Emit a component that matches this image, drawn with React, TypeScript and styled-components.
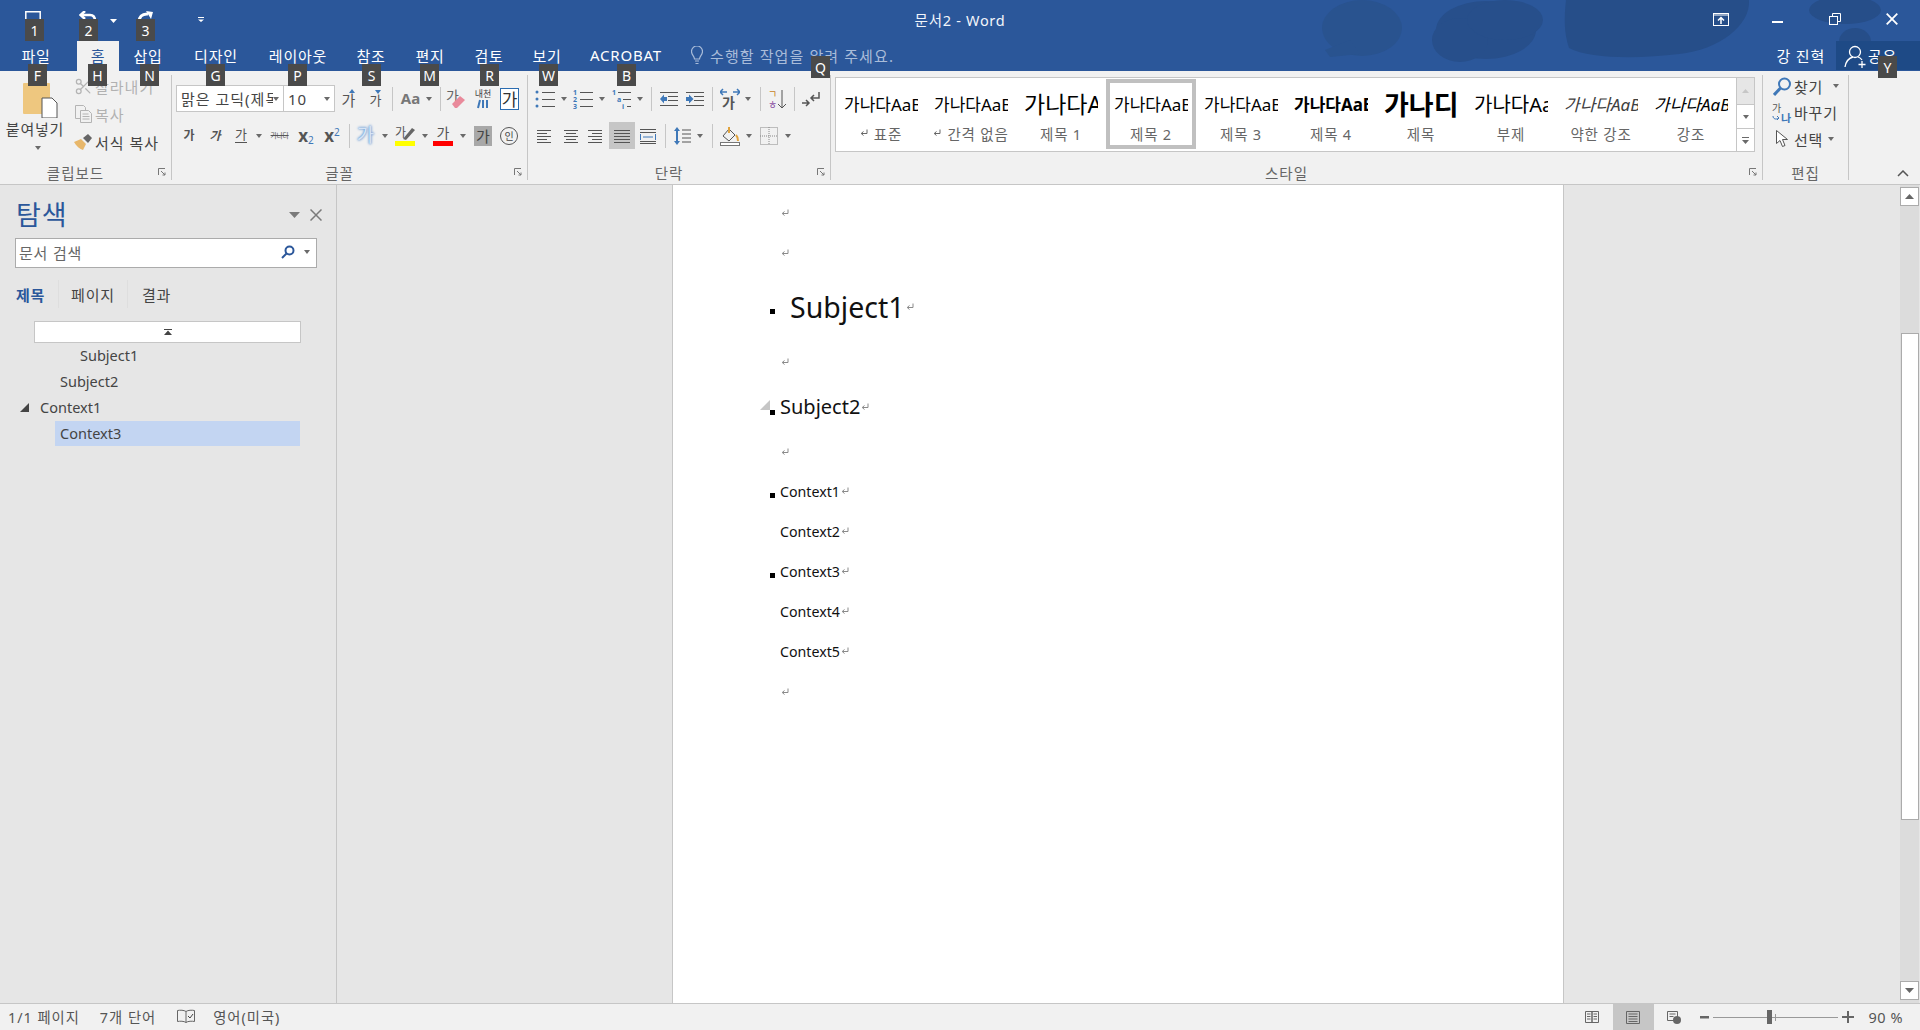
import React from 'react';
import styled, { createGlobalStyle } from 'styled-components';
import { Scissors } from 'lucide-react';

const GlobalStyle = createGlobalStyle`
  html, body { margin: 0; padding: 0; height: 100%; overflow: hidden; }
  body { font-family: "Noto Sans", "Noto Sans CJK KR", sans-serif; color: #444; }
  * { box-sizing: border-box; }
`;

const Shell = styled.div`
  position: relative;
  width: 1920px;
  height: 1030px;
  display: flex;
  flex-direction: column;
  overflow: hidden;
  background: #e6e6e6;
`;

const KeyTip = styled.div<{ $x: number; $y: number }>`
  position: absolute;
  left: ${(p) => p.$x}px;
  top: ${(p) => p.$y}px;
  width: 19px;
  height: 22px;
  background: #4a4a4a;
  color: #fff;
  font-size: 14px;
  line-height: 24px;
  text-align: center;
  z-index: 5;
`;

/* title bar */
const Header = styled.header`
  position: relative;
  height: 71px;
  background: #2b579a;
  color: #fff;
  flex: none;
`;

const Blobs = styled.svg`
  position: absolute;
  left: 0;
  top: 0;
`;

const TitleRow = styled.div`
  position: relative;
  height: 41px;
  display: grid;
  grid-template-columns: 1fr auto 1fr;
  align-items: center;
`;

const Qat = styled.div`
  display: flex;
  align-items: center;
  height: 100%;
  padding-left: 25px;
`;

const QatSlot = styled.div<{ $w: number }>`
  width: ${(p) => p.$w}px;
  height: 100%;
  padding-top: 11px;
  display: flex;
  align-items: flex-start;
`;

const DocTitle = styled.div`
  font-size: 14.5px;
  letter-spacing: 0.7px;
  margin-top: -2px;
  color: #f2f5fa;
`;

const WinControls = styled.div`
  display: flex;
  justify-content: flex-end;
  height: 100%;
  padding-top: 13px;
`;

const WinBtn = styled.div`
  width: 57px;
  display: flex;
  justify-content: center;
`;

const TabRow = styled.nav`
  position: relative;
  height: 30px;
  display: flex;
  align-items: stretch;
`;

const Tab = styled.div<{ $w: number; $active?: boolean; $mr?: number }>`
  width: ${(p) => p.$w}px;
  margin-right: ${(p) => p.$mr ?? 0}px;
  display: flex;
  align-items: center;
  justify-content: center;
  font-size: 15px;
  letter-spacing: 0.8px;
  padding-bottom: 2px;
  color: ${(p) => (p.$active ? '#2b579a' : '#fff')};
  background: ${(p) => (p.$active ? '#f1f1f1' : 'transparent')};
`;

const TellMe = styled.div`
  margin-left: 14px;
  display: flex;
  align-items: center;
  gap: 7px;
  font-size: 15px;
  letter-spacing: 1.1px;
  padding-bottom: 2px;
  color: #a9bcd9;
`;

const Account = styled.div`
  margin-left: auto;
  display: flex;
  align-items: center;
  font-size: 15px;
  letter-spacing: 0.8px;
  padding-right: 11px;
  padding-bottom: 2px;
`;

const ShareBtn = styled.div`
  width: 84px;
  display: flex;
  align-items: center;
  padding-left: 8px;
  background: #1e4a86;
  font-size: 15px;
  letter-spacing: 0.8px;
  margin-bottom: 1px;
`;

/* ribbon */
const Ribbon = styled.section`
  height: 114px;
  flex: none;
  display: flex;
  background: #f1f1f1;
  border-bottom: 1px solid #c6c6c6;
`;

const RibbonSep = styled.div`
  width: 1px;
  margin: 4px 0 4px;
  background: #c6c6c6;
  flex: none;
`;

const Group = styled.div<{ $w: number }>`
  width: ${(p) => p.$w}px;
  flex: none;
  display: flex;
  flex-direction: column;
`;

const GroupBody = styled.div<{ $pl?: number; $pt?: number }>`
  flex: 1;
  min-height: 0;
  padding-left: ${(p) => p.$pl ?? 0}px;
  padding-top: ${(p) => p.$pt ?? 0}px;
`;

const GroupFoot = styled.div<{ $launch?: boolean }>`
  height: 24px;
  flex: none;
  display: grid;
  grid-template-columns: ${(p) => (p.$launch ? '1fr auto 1fr 20px' : '1fr auto 1fr')};
  align-items: center;
  font-size: 14.5px;
  letter-spacing: 1px;
  color: #666;
`;

const Launcher = styled.svg`
  grid-column: 4;
  justify-self: end;
  margin-right: 5px;
`;

const FootText = styled.span`
  grid-column: 2;
`;

const ClipBody = styled.div`
  flex: 1;
  display: flex;
  min-height: 0;
`;

const PasteBtn = styled.div`
  width: 70px;
  display: flex;
  flex-direction: column;
  align-items: center;
  padding-top: 12px;
  font-size: 15px;
  letter-spacing: 0.8px;
  color: #444;
`;

const PasteIcon = styled.svg`
  flex: none;
  margin-left: 10px;
`;

const PasteLabel = styled.span`
  margin-top: 2px;
  line-height: 18px;
  white-space: nowrap;
`;

const CaretSlot = styled.div`
  display: flex;
  margin-top: 8px;
  margin-left: 6px;
`;

const ClipList = styled.div`
  display: flex;
  flex-direction: column;
  padding-left: 3px;
  padding-top: 1px;
`;

const ClipItem = styled.div<{ $off?: boolean }>`
  height: 28px;
  display: flex;
  align-items: center;
  gap: 2px;
  font-size: 15px;
  letter-spacing: 1px;
  white-space: nowrap;
  color: ${(p) => (p.$off ? '#b1b1b1' : '#444')};
`;

const ClipIcon = styled.div`
  width: 20px;
  display: flex;
  justify-content: center;
`;

const ToolRow = styled.div<{ $mt?: number }>`
  height: 27px;
  margin-top: ${(p) => p.$mt ?? 0}px;
  display: flex;
  align-items: center;
`;

const Cell = styled.div<{ $w: number; $on?: boolean; $gap?: number }>`
  width: ${(p) => p.$w}px;
  height: 27px;
  flex: none;
  display: flex;
  align-items: center;
  justify-content: center;
  gap: ${(p) => p.$gap ?? 0}px;
  background: ${(p) => (p.$on ? '#c6c6c6' : 'transparent')};
`;

const Sep = styled.div<{ $ml?: number }>`
  width: 1px;
  height: 24px;
  flex: none;
  margin-left: ${(p) => p.$ml ?? 0}px;
  background: #c6c6c6;
`;

const Combo = styled.div<{ $w: number }>`
  width: ${(p) => p.$w}px;
  height: 27px;
  flex: none;
  display: flex;
  align-items: center;
  justify-content: space-between;
  padding: 0 4px;
  background: #fff;
  border: 1px solid #c6c6c6;
  font-size: 15px;
  letter-spacing: 1px;
  color: #444;
  & + & { border-left: 0; }
`;

const ComboText = styled.span`
  overflow: hidden;
  white-space: nowrap;
  flex: 1;
  min-width: 0;
`;

const Caret = styled.span`
  display: inline-block;
  width: 0;
  height: 0;
  flex: none;
  border-left: 3.5px solid transparent;
  border-right: 3.5px solid transparent;
  border-top: 4px solid #6a6a6a;
`;

const Ga = styled.span<{ $size?: number; $bold?: boolean; $italic?: boolean; $color?: string }>`
  font-size: ${(p) => p.$size ?? 15}px;
  font-weight: ${(p) => (p.$bold ? 700 : 400)};
  font-style: ${(p) => (p.$italic ? 'italic' : 'normal')};
  color: ${(p) => p.$color ?? '#555'};
  line-height: 1;
  white-space: nowrap;
`;

const Script = styled.span<{ $shift: number }>`
  font-size: 10px;
  line-height: 1;
  color: #3f78b8;
  margin-top: ${(p) => p.$shift}px;
`;

const Underlined = styled(Ga)`
  border-bottom: 1px solid #555;
  padding-bottom: 1px;
`;

const Strike = styled(Ga)`
  text-decoration: line-through;
  text-decoration-thickness: 1px;
  letter-spacing: -0.5px;
`;

const Glow = styled(Ga)`
  text-shadow: 0 0 3px #5b8fd0, 0 0 2px #5b8fd0;
  color: #d6e4f5;
`;

const Boxed = styled.span`
  width: 19px;
  height: 22px;
  display: flex;
  align-items: center;
  justify-content: center;
  border: 1px solid #2b6cb0;
  background: #fff;
  font-size: 17px;
  color: #333;
`;

const Shaded = styled.span`
  width: 18px;
  height: 20px;
  display: flex;
  align-items: center;
  justify-content: center;
  background: #a8a8a8;
  font-size: 15px;
  color: #444;
`;

const Circled = styled.span`
  width: 18px;
  height: 18px;
  border: 1px solid #555;
  border-radius: 50%;
  display: flex;
  align-items: center;
  justify-content: center;
  font-size: 10px;
  color: #444;
`;

const Stack = styled.span`
  display: flex;
  flex-direction: column;
  align-items: center;
  line-height: 1;
`;

const ColorBar = styled.span<{ $color: string }>`
  width: 20px;
  height: 5px;
  margin-top: 1px;
  background: ${(p) => p.$color};
`;

const GrowWrap = styled.span`
  display: flex;
  flex-direction: column;
  align-items: flex-end;
`;

const Tiny = styled.span`
  font-size: 9px;
  line-height: 10px;
  color: #444;
`;

/* styles gallery */
const Gallery = styled.div`
  width: 920px;
  height: 75px;
  margin: 6px 0 0 4px;
  display: flex;
  background: #fff;
  border: 1px solid #c6c6c6;
`;

const StyleItem = styled.div<{ $on?: boolean }>`
  width: 90px;
  height: 70px;
  margin-top: 1px;
  border: 4px solid ${(p) => (p.$on ? '#c0c0c0' : 'transparent')};
  display: flex;
  flex-direction: column;
  align-items: center;
`;

const StyleSample = styled.div<{ $size: number; $bold?: boolean; $italic?: boolean; $color?: string }>`
  width: 74px;
  height: 44px;
  margin-top: -2px;
  overflow: hidden;
  white-space: nowrap;
  display: flex;
  align-items: center;
  flex: none;
  font-size: ${(p) => p.$size}px;
  font-weight: ${(p) => (p.$bold ? 700 : 400)};
  font-style: ${(p) => (p.$italic ? 'italic' : 'normal')};
  color: ${(p) => p.$color ?? '#000'};
`;

const StyleLabel = styled.div`
  height: 16px;
  display: flex;
  align-items: center;
  gap: 6px;
  font-size: 14.5px;
  letter-spacing: 0.8px;
  color: #666;
  white-space: nowrap;
`;

const GalleryScroll = styled.div`
  width: 18px;
  display: flex;
  flex-direction: column;
  margin-left: auto;
  border-left: 1px solid #c6c6c6;
`;

const GalleryBtn = styled.div<{ $h: number; $off?: boolean }>`
  height: ${(p) => p.$h}px;
  display: flex;
  align-items: center;
  justify-content: center;
  background: ${(p) => (p.$off ? '#e6e6e6' : '#fff')};
  & + & { border-top: 1px solid #c6c6c6; }
`;

const EditList = styled.div`
  flex: 1;
  display: flex;
  flex-direction: column;
  padding-top: 2px;
`;

const EditItem = styled.div`
  height: 26.5px;
  display: flex;
  align-items: center;
  font-size: 15px;
  letter-spacing: 0.8px;
  color: #444;
`;

const EditIcon = styled.div`
  width: 31px;
  padding-left: 7px;
  display: flex;
  justify-content: center;
`;

const EditCaret = styled.span<{ $ml: number }>`
  margin-left: ${(p) => p.$ml}px;
  display: flex;
`;

const CollapseCell = styled.div`
  flex: 1;
  display: flex;
  align-items: flex-end;
  justify-content: flex-end;
  padding: 0 11px 7px 0;
`;

/* workspace */
const Workspace = styled.main`
  flex: 1;
  min-height: 0;
  display: flex;
`;

const NavPane = styled.aside`
  width: 337px;
  flex: none;
  border-right: 1px solid #c6c6c6;
  padding-top: 13px;
`;

const NavHead = styled.div`
  height: 30px;
  display: flex;
  align-items: center;
  padding: 0 14px 0 16px;
`;

const NavTitle = styled.h2`
  margin: 0;
  font-size: 27px;
  font-weight: 400;
  letter-spacing: 1px;
  color: #2b579a;
`;

const NavTools = styled.div`
  margin-left: auto;
  margin-top: 4px;
  display: flex;
  align-items: center;
  gap: 10px;
`;

const NavSearch = styled.div`
  width: 302px;
  height: 30px;
  margin: 10px 0 0 15px;
  padding: 0 5px 2px 3px;
  display: flex;
  align-items: center;
  background: #fff;
  border: 1px solid #ababab;
  font-size: 15px;
  letter-spacing: 0.8px;
  color: #666;
`;

const NavSearchTools = styled.div`
  margin-left: auto;
  display: flex;
  align-items: center;
  gap: 9px;
  padding-right: 1px;
`;

const NavTabs = styled.div`
  height: 28px;
  margin: 12px 0 0 16px;
  display: flex;
  align-items: center;
`;

const NavTab = styled.div<{ $w: number; $active?: boolean }>`
  width: ${(p) => p.$w}px;
  height: 28px;
  display: flex;
  align-items: center;
  justify-content: ${(p) => (p.$active ? 'flex-start' : 'center')};
  font-size: 15px;
  letter-spacing: 0.8px;
  font-weight: ${(p) => (p.$active ? 700 : 400)};
  color: ${(p) => (p.$active ? '#2b579a' : '#444')};
  & + & { border-left: 1px solid #dedede; }
`;

const TreeUp = styled.div`
  width: 267px;
  height: 22px;
  margin: 13px 0 0 34px;
  display: flex;
  align-items: center;
  justify-content: center;
  background: #fff;
  border: 1px solid #c6c6c6;
`;

const TreeRow = styled.div<{ $indent: number; $selected?: boolean }>`
  height: ${(p) => (p.$selected ? 25 : 26)}px;
  width: ${(p) => (p.$selected ? '245px' : 'auto')};
  margin-left: ${(p) => (p.$selected ? '55px' : '0')};
  padding-left: ${(p) => p.$indent}px;
  padding-bottom: 2px;
  display: flex;
  align-items: center;
  gap: 11px;
  font-size: 14.5px;
  color: #444;
  background: ${(p) => (p.$selected ? '#c3d5f2' : 'transparent')};
`;

const DocArea = styled.div`
  flex: 1;
  min-width: 0;
  padding-right: 1px;
  display: flex;
  justify-content: center;
`;

const Page = styled.article`
  width: 892px;
  background: #fff;
  border-left: 1px solid #c6c6c6;
  border-right: 1px solid #c6c6c6;
  padding: 8px 0 0 97px;
  color: #111;
`;

const Line = styled.div<{ $h: number; $size?: number }>`
  height: ${(p) => p.$h}px;
  display: flex;
  align-items: center;
  font-size: ${(p) => p.$size ?? 14.2}px;
  white-space: nowrap;
`;

const Gutter = styled.div<{ $w?: number }>`
  position: relative;
  width: ${(p) => p.$w ?? 10}px;
  flex: none;
  align-self: stretch;
  display: flex;
  align-items: center;
`;

const Bullet = styled.span<{ $drop: number }>`
  width: 5px;
  height: 5px;
  background: #000;
  margin-top: ${(p) => p.$drop}px;
`;

const Fold = styled.svg`
  position: absolute;
  left: -10px;
  top: 17px;
`;

const ParaGap = styled.span<{ $mt?: number }>`
  margin-left: 1px;
  margin-top: ${(p) => p.$mt ?? 0}px;
  display: flex;
`;

const ScrollBar = styled.div`
  width: 19px;
  margin-right: 1px;
  flex: none;
  display: flex;
  flex-direction: column;
  align-items: center;
  padding: 2px 0 3px;
  background: #dcdcdc;
`;

const ScrollBtn = styled.div`
  width: 19px;
  height: 19px;
  flex: none;
  display: flex;
  align-items: center;
  justify-content: center;
  background: #fff;
  border: 1px solid #ababab;
`;

const ScrollThumb = styled.div`
  width: 18px;
  height: 487px;
  margin-top: 127px;
  margin-bottom: auto;
  background: #fff;
  border: 1px solid #ababab;
`;

/* status bar */
const StatusBar = styled.footer`
  height: 27px;
  flex: none;
  display: flex;
  align-items: stretch;
  background: #f1f1f1;
  border-top: 1px solid #c6c6c6;
  font-size: 14.3px;
  letter-spacing: 1px;
  color: #555;
`;

const StatusLeft = styled.div`
  display: flex;
  align-items: center;
  padding-left: 8px;
  padding-bottom: 2px;
`;

const StatusItem = styled.span<{ $ml?: number }>`
  margin-left: ${(p) => p.$ml ?? 0}px;
  display: flex;
`;

const StatusRight = styled.div`
  margin-left: auto;
  display: flex;
  align-items: center;
  padding-right: 17px;
`;

const ViewBtn = styled.div<{ $w: number; $on?: boolean }>`
  width: ${(p) => p.$w}px;
  align-self: stretch;
  display: flex;
  align-items: center;
  justify-content: center;
  background: ${(p) => (p.$on ? '#c6c6c6' : 'transparent')};
`;

const ZoomTrack = styled.div`
  position: relative;
  width: 125px;
  height: 1px;
  margin: 0 4px;
  background: #999;
`;

const ZoomThumb = styled.span`
  position: absolute;
  left: 54px;
  top: -7px;
  width: 5px;
  height: 14px;
  background: #666;
`;

const ZoomTick = styled.span`
  position: absolute;
  left: 62px;
  top: -3px;
  width: 1px;
  height: 7px;
  background: #999;
`;

const ZoomText = styled.span`
  margin-left: 15px;
  font-size: 14.5px;
  letter-spacing: 0.5px;
`;

/* drawings */
const Para = ({ color = '#8a8a8a' }: { color?: string }) => (
  <svg width="8" height="8" viewBox="0 0 8 8" fill="none" stroke={color}>
    <path d="M7 .5V4.500H1.500" />
    <path d="M3.500 2.500 1.200 4.500 3.500 6.500" />
  </svg>
);

const Launch = () => (
  <Launcher width="8" height="8" viewBox="0 0 8 8" fill="none" stroke="#777">
    <path d="M.5 7V.5H7" />
    <path d="M3 3l4 4M7 4.500V7H4.500" />
  </Launcher>
);

const Lines = ({ rows, color = '#555', w = 16 }: { rows: [number, number][]; color?: string; w?: number }) => (
  <svg width={w} height="16" viewBox={`0 0 ${w} 16`} stroke={color}>
    {rows.map(([x1, x2], i) => (
      <path key={i} d={`M${x1} ${2.5 + i * 3}H${x2}`} />
    ))}
  </svg>
);

const Bullets = () => (
  <svg width="20" height="20" viewBox="0 0 20 20">
    <g fill="#3f78b8">
      <circle cx="2" cy="3" r="1.500" />
      <circle cx="2" cy="10" r="1.500" />
      <circle cx="2" cy="17" r="1.500" />
    </g>
    <path d="M7 3.500h13M7 10.500h13M7 17.500h13" stroke="#555" />
  </svg>
);

const Numbers = () => (
  <svg width="20" height="20" viewBox="0 0 20 20">
    <g fill="#3f78b8" fontSize="7" fontWeight="700">
      <text x="0" y="6">1</text>
      <text x="0" y="13">2</text>
      <text x="0" y="20">3</text>
    </g>
    <path d="M7 3.500h13M7 10.500h13M7 17.500h13" stroke="#555" />
  </svg>
);

const Multi = () => (
  <svg width="20" height="20" viewBox="0 0 20 20">
    <g fill="#3f78b8" fontSize="7" fontWeight="700">
      <text x="0" y="6">1</text>
      <text x="5" y="13">a</text>
      <text x="10" y="20">i</text>
    </g>
    <path d="M6 3.500h13M11 10.500h8M15 17.500h4" stroke="#555" />
  </svg>
);

const Indent = ({ flip }: { flip?: boolean }) => (
  <svg width="18" height="16" viewBox="0 0 18 16">
    <path d="M0 1.500h18M8 5.500h10M8 9.500h10M0 14.500h18" stroke="#555" />
    <path d={flip ? 'M0 6h3V3.500L7.500 8 3 12.500V10H0z' : 'M7 6H4V3.500L0 8l4 4.500V10h3z'} fill="#3f78b8" />
  </svg>
);

const Win = {
  Options: () => (
    <svg width="16" height="13" viewBox="0 0 16 13" fill="none" stroke="#fff">
      <rect x=".5" y=".5" width="15" height="12" />
      <path d="M1 2h14" />
      <path d="M8 11V4.500M5 7.500l3-3 3 3" strokeWidth="1.500" />
    </svg>
  ),
  Min: () => (
    <svg width="11" height="12" viewBox="0 0 11 12">
      <path d="M0 8h11v2H0z" fill="#fff" />
    </svg>
  ),
  Restore: () => (
    <svg width="12" height="12" viewBox="0 0 12 12" fill="none" stroke="#fff">
      <path d="M3.500 3V.5h8v8H9" />
      <rect x=".5" y="3.500" width="8" height="8" />
    </svg>
  ),
  Close: () => (
    <svg width="12" height="12" viewBox="0 0 12 12" fill="none" stroke="#fff" strokeWidth="1.800">
      <path d="M.7.7l10.600 10.600M11.300.7.7 11.300" />
    </svg>
  ),
};

const samples = [
  { label: '표준', size: 17, para: true },
  { label: '간격 없음', size: 17, para: true },
  { label: '제목 1', size: 23 },
  { label: '제목 2', size: 17, on: true },
  { label: '제목 3', size: 17 },
  { label: '제목 4', size: 17, bold: true },
  { label: '제목', size: 27, bold: true, text: '가나디' },
  { label: '부제', size: 20 },
  { label: '약한 강조', size: 17, italic: true, color: '#404040' },
  { label: '강조', size: 17, italic: true },
];

const keyTips: [string, number, number][] = [
  ['1', 25, 19], ['2', 79, 19], ['3', 136, 19],
  ['F', 28, 64], ['H', 88, 64], ['N', 140, 64], ['G', 206, 64], ['P', 288, 64],
  ['S', 362, 64], ['M', 420, 64], ['R', 480, 64], ['W', 539, 64], ['B', 617, 64],
  ['Q', 811, 56], ['Y', 1878, 56],
];

const tabs: [string, number][] = [
  ['삽입', 58], ['디자인', 78], ['레이아웃', 86], ['참조', 60], ['편지', 58], ['검토', 60], ['보기', 56], ['ACROBAT', 102],
];

const contexts = ['Context1', 'Context2', 'Context3', 'Context4', 'Context5'];

const FontGroup = () => (
  <Group $w={355}>
    <GroupBody $pl={4} $pt={14}>
      <ToolRow>
        <Combo $w={108}>
          <ComboText>맑은 고딕(제목)</ComboText>
          <Caret />
        </Combo>
        <Combo $w={51}>
          <ComboText>10</ComboText>
          <Caret />
        </Combo>
        <Cell $w={27}>
          <GrowWrap>
            <svg width="6" height="4" viewBox="0 0 6 4"><path d="M0 4 3 0l3 4z" fill="#3f78b8" /></svg>
            <Ga $size={15}>가</Ga>
          </GrowWrap>
        </Cell>
        <Cell $w={27}>
          <GrowWrap>
            <svg width="6" height="4" viewBox="0 0 6 4"><path d="M0 0h6L3 4z" fill="#3f78b8" /></svg>
            <Ga $size={13}>가</Ga>
          </GrowWrap>
        </Cell>
        <Sep $ml={3} />
        <Cell $w={47} $gap={6}>
          <Ga $size={15} $bold $color="#777">Aa</Ga>
          <Caret />
        </Cell>
        <Sep />
        <Cell $w={30}>
          <svg width="20" height="22" viewBox="0 0 20 22">
            <text x="0" y="13" fontSize="14" fill="#666">가</text>
            <path d="M6 16l8-8 5 4-8 8H9z" fill="#e98a9b" />
          </svg>
        </Cell>
        <Cell $w={24}>
          <Stack>
            <Tiny>내천</Tiny>
            <svg width="12" height="10" viewBox="0 0 12 10"><path d="M1 9 3 1M6 1v8M10 1v8" stroke="#3f78b8" strokeWidth="2" /></svg>
          </Stack>
        </Cell>
        <Cell $w={29}>
          <Boxed>가</Boxed>
        </Cell>
      </ToolRow>
      <ToolRow $mt={10}>
        <Cell $w={26}><Ga $size={12} $bold>가</Ga></Cell>
        <Cell $w={26}><Ga $size={12} $bold $italic>가</Ga></Cell>
        <Cell $w={41} $gap={9}>
          <Underlined $size={13}>가</Underlined>
          <Caret />
        </Cell>
        <Cell $w={21}><Strike $size={7}>가나다</Strike></Cell>
        <Cell $w={32}>
          <Ga $size={17} $bold>x</Ga>
          <Script $shift={8}>2</Script>
        </Cell>
        <Cell $w={20}>
          <Ga $size={17} $bold>x</Ga>
          <Script $shift={-7}>2</Script>
        </Cell>
        <Sep $ml={7} />
        <Cell $w={45} $gap={8}>
          <Glow $size={19}>가</Glow>
          <Caret />
        </Cell>
        <Cell $w={33} $gap={7}>
          <Stack>
            <svg width="20" height="15" viewBox="0 0 20 15">
              <text x="0" y="12" fontSize="12" fill="#555">가</text>
              <path d="M8 14 17 3l3 2-9 10z" fill="#666" />
            </svg>
            <ColorBar $color="#ffff00" />
          </Stack>
          <Caret />
        </Cell>
        <Cell $w={43} $gap={7}>
          <Stack>
            <Ga $size={14}>가</Ga>
            <ColorBar $color="#ff0000" />
          </Stack>
          <Caret />
        </Cell>
        <Cell $w={24}><Shaded>가</Shaded></Cell>
        <Cell $w={28}><Circled>인</Circled></Cell>
      </ToolRow>
    </GroupBody>
    <GroupFoot $launch>
      <FootText>글꼴</FootText>
      <Launch />
    </GroupFoot>
  </Group>
);

const ParagraphGroup = () => (
  <Group $w={302}>
    <GroupBody $pt={14}>
      <ToolRow>
        <Cell $w={45} $gap={6}><Bullets /><Caret /></Cell>
        <Cell $w={32} $gap={6}><Numbers /><Caret /></Cell>
        <Cell $w={45} $gap={5}><Multi /><Caret /></Cell>
        <Sep $ml={1} />
        <Cell $w={34}><Indent /></Cell>
        <Cell $w={18}><Indent flip /></Cell>
        <Sep $ml={8} />
        <Cell $w={45} $gap={5}>
          <svg width="20" height="22" viewBox="0 0 20 22">
            <path d="M0 4h7M3 1 0 4l3 3M13 4h7M17 1l3 3-3 3" stroke="#3f78b8" strokeWidth="1.500" fill="none" />
            <text x="2" y="20" fontSize="14" fontWeight="700" fill="#555">가</text>
          </svg>
          <Caret />
        </Cell>
        <Sep $ml={2} />
        <Cell $w={32}>
          <svg width="19" height="22" viewBox="0 0 19 22">
            <text x="0" y="10" fontSize="10" fill="#c77f1d">ㄱ</text>
            <text x="0" y="21" fontSize="10" fill="#8a4fa3">ㅎ</text>
            <path d="M14 2v18M10 16l4 4 4-4" stroke="#555" fill="none" />
          </svg>
        </Cell>
        <Sep $ml={1} />
        <Cell $w={32}>
          <svg width="18" height="16" viewBox="0 0 18 16" fill="none">
            <path d="M17 1v6h-8M12 4 9 7l3 3" stroke="#555" strokeWidth="1.500" />
            <path d="M0 12h7M4 9l3 3-3 3" stroke="#555" strokeWidth="1.500" />
          </svg>
        </Cell>
      </ToolRow>
      <ToolRow $mt={10}>
        <Cell $w={32}><Lines rows={[[1, 15], [1, 11], [1, 15], [1, 11], [1, 15]]} /></Cell>
        <Cell $w={21}><Lines rows={[[1, 15], [3, 13], [1, 15], [3, 13], [1, 15]]} /></Cell>
        <Cell $w={28}><Lines rows={[[1, 15], [5, 15], [1, 15], [5, 15], [1, 15]]} /></Cell>
        <Cell $w={26} $on><Lines rows={[[1, 17], [1, 17], [1, 17], [1, 17], [1, 17]]} w={18} /></Cell>
        <Cell $w={25}>
          <svg width="18" height="16" viewBox="0 0 18 16">
            <path d="M1 1.500h16M1 4.500h16M1 13.500h16M1 15.500h16" stroke="#555" />
            <path d="M1.500 6v6M16.500 6v6M4 9h10" stroke="#3f78b8" />
          </svg>
        </Cell>
        <Sep $ml={5} />
        <Cell $w={45} $gap={6}>
          <svg width="17" height="20" viewBox="0 0 17 20">
            <path d="M3 1 0 5h2v10H0l3 4 3-4H4V5h2z" fill="#3f78b8" />
            <path d="M8 4h9M8 8h9M8 12h9M8 16h9" stroke="#555" />
          </svg>
          <Caret />
        </Cell>
        <Sep $ml={1} />
        <Cell $w={46} $gap={6}>
          <svg width="20" height="20" viewBox="0 0 20 20" fill="none">
            <path d="M3 10 9 3l6 6-6 6z" stroke="#555" />
            <path d="M9 1v6M16 9c2 2 2 5 2 6" stroke="#e0a33e" strokeWidth="2" />
            <rect x=".5" y="16.500" width="19" height="3" stroke="#777" fill="#fff" />
          </svg>
          <Caret />
        </Cell>
        <Cell $w={33} $gap={7}>
          <svg width="18" height="18" viewBox="0 0 18 18" fill="none" stroke="#888" strokeDasharray="1 1">
            <rect x=".5" y=".5" width="17" height="17" />
            <path d="M9 0v18M0 9h18" />
          </svg>
          <Caret />
        </Cell>
      </ToolRow>
    </GroupBody>
    <GroupFoot $launch>
      <FootText>단락</FootText>
      <Launch />
    </GroupFoot>
  </Group>
);

export default function App() {
  return (
    <Shell>
      <GlobalStyle />
      {keyTips.map(([label, x, y]) => (
        <KeyTip key={label} $x={x} $y={y}>{label}</KeyTip>
      ))}

      <Header>
        <Blobs width="1920" height="71" viewBox="0 0 1920 71">
          <g fill="#29538f">
            <ellipse cx="1362" cy="28" rx="40" ry="28" />
            <path d="M1325 50l25-10 10 14-30 3z" />
          </g>
          <g fill="#274f8b">
            <ellipse cx="1486" cy="30" rx="50" ry="29" />
            <ellipse cx="1460" cy="40" rx="28" ry="22" />
            <ellipse cx="1505" cy="20" rx="38" ry="20" />
          </g>
          <g fill="#264e89">
            <path d="M1566 0h183c2 25-30 50-70 54-40 5-90 5-110-6-5-15-5-30-3-48z" />
            <ellipse cx="1845" cy="10" rx="36" ry="14" />
            <ellipse cx="1855" cy="42" rx="16" ry="14" />
          </g>
        </Blobs>
        <TitleRow>
          <Qat>
            <QatSlot $w={54}>
              <svg width="16" height="16" viewBox="0 0 16 16" fill="none" stroke="#fff" strokeWidth="1.500">
                <path d="M.8.8h14.400v14.400H.8z" />
              </svg>
            </QatSlot>
            <QatSlot $w={31}>
              <svg width="18" height="12" viewBox="0 0 18 12" fill="none" stroke="#fff" strokeWidth="2.500">
                <path d="M2 4h9c3 0 5 2 5 6" />
                <path d="M6 0 1.500 4 6 8" />
              </svg>
            </QatSlot>
            <QatSlot $w={27}>
              <svg width="7" height="12" viewBox="0 0 7 12"><path d="M0 8h7l-3.500 4z" fill="#fff" /></svg>
            </QatSlot>
            <QatSlot $w={61}>
              <svg width="16" height="12" viewBox="0 0 16 12">
                <path d="M2.500 12C1.500 6 5 2.500 11 3" fill="none" stroke="#fff" strokeWidth="3" />
                <path d="M9 0l7 1-2 7z" fill="#fff" />
              </svg>
            </QatSlot>
            <QatSlot $w={8}>
              <svg width="6" height="12" viewBox="0 0 6 12">
                <path d="M0 6h6v1H0zM0 8.500h6L3 11z" fill="#fff" />
              </svg>
            </QatSlot>
          </Qat>
          <DocTitle>문서2 - Word</DocTitle>
          <WinControls>
            <WinBtn><Win.Options /></WinBtn>
            <WinBtn><Win.Min /></WinBtn>
            <WinBtn><Win.Restore /></WinBtn>
            <WinBtn><Win.Close /></WinBtn>
          </WinControls>
        </TitleRow>
        <TabRow>
          <Tab $w={72} $mr={5}>파일</Tab>
          <Tab $w={42} $active>홈</Tab>
          {tabs.map(([label, w]) => (
            <Tab key={label} $w={w}>{label}</Tab>
          ))}
          <TellMe>
            <svg width="12" height="19" viewBox="0 0 12 19" fill="none" stroke="#a9bcd9" strokeWidth="1.200">
              <path d="M3.500 13c0-3-3-4-3-7.500a5.500 5.500 0 0 1 11 0C11.500 9 8.500 10 8.500 13z" />
              <path d="M4 15h4M4.500 17.500h3" />
            </svg>
            수행할 작업을 알려 주세요.
          </TellMe>
          <Account>강 진혁</Account>
          <ShareBtn>
            <svg width="24" height="24" viewBox="0 0 24 24" fill="none" stroke="#fff" strokeWidth="1.300">
              <circle cx="11" cy="8" r="5.500" />
              <path d="M1 23c1-6 4-9 8-10M14 13c1.500.5 3 1.500 4 3M18 17v7M14.500 20.500h7" />
            </svg>
            공유
          </ShareBtn>
        </TabRow>
      </Header>

      <Ribbon>
        <Group $w={171}>
          <ClipBody>
            <PasteBtn>
              <PasteIcon width="36" height="35" viewBox="0 0 36 35">
                <rect x="1" y="0" width="27" height="31" rx="1" fill="#eec77f" />
                <path d="M20 15h10l5 5v15H20z" fill="#fff" stroke="#555" />
              </PasteIcon>
              <PasteLabel>붙여넣기</PasteLabel>
              <CaretSlot><Caret /></CaretSlot>
            </PasteBtn>
            <ClipList>
              <ClipItem $off>
                <ClipIcon><Scissors size={19} strokeWidth={1.6} color="#b4b4b4" /></ClipIcon>
                잘라내기
              </ClipItem>
              <ClipItem $off>
                <ClipIcon>
                  <svg width="17" height="18" viewBox="0 0 17 18" fill="none" stroke="#b4b4b4">
                    <path d="M.5.5h8l2 2v3M.5.5v13H5" />
                    <path d="M5.500 5.500h8l3 3v9h-11z" fill="#f1f1f1" />
                    <path d="M7.500 9h6M7.500 11.500h7M7.500 14h7" />
                  </svg>
                </ClipIcon>
                복사
              </ClipItem>
              <ClipItem>
                <ClipIcon>
                  <svg width="18" height="16" viewBox="0 0 18 16">
                    <path d="M0 8l7-3 5 5-3 6c-3-1-7-4-9-8z" fill="#e8b76a" />
                    <path d="M9 4l5-4 4 4-4 5z" fill="#666" />
                  </svg>
                </ClipIcon>
                서식 복사
              </ClipItem>
            </ClipList>
          </ClipBody>
          <GroupFoot $launch>
            <FootText>클립보드</FootText>
            <Launch />
          </GroupFoot>
        </Group>
        <RibbonSep />
        <FontGroup />
        <RibbonSep />
        <ParagraphGroup />
        <RibbonSep />
        <Group $w={931}>
          <GroupBody>
            <Gallery>
              {samples.map((s) => (
                <StyleItem key={s.label} $on={s.on}>
                  <StyleSample $size={s.size} $bold={s.bold} $italic={s.italic} $color={s.color}>
                    {s.text ?? '가나다AaBb'}
                  </StyleSample>
                  <StyleLabel>
                    {s.para && <Para color="#666" />}
                    {s.label}
                  </StyleLabel>
                </StyleItem>
              ))}
              <GalleryScroll>
                <GalleryBtn $h={26} $off>
                  <svg width="7" height="4" viewBox="0 0 7 4"><path d="M0 4 3.500 0 7 4z" fill="#c6c6c6" /></svg>
                </GalleryBtn>
                <GalleryBtn $h={24}><Caret /></GalleryBtn>
                <GalleryBtn $h={23}>
                  <svg width="7" height="7" viewBox="0 0 7 7"><path d="M0 0h7v1H0zM0 3h7L3.500 7z" fill="#6a6a6a" /></svg>
                </GalleryBtn>
              </GalleryScroll>
            </Gallery>
          </GroupBody>
          <GroupFoot $launch>
            <FootText>스타일</FootText>
            <Launch />
          </GroupFoot>
        </Group>
        <RibbonSep />
        <Group $w={85}>
          <EditList>
            <EditItem>
              <EditIcon>
                <svg width="19" height="19" viewBox="0 0 19 19" fill="none" stroke="#3f78b8" strokeWidth="2">
                  <circle cx="11.500" cy="7" r="5.500" />
                  <path d="M7.500 11 1 18" strokeWidth="3" />
                </svg>
              </EditIcon>
              찾기
              <EditCaret $ml={10}><Caret /></EditCaret>
            </EditItem>
            <EditItem>
              <EditIcon>
                <svg width="20" height="20" viewBox="0 0 20 20">
                  <text x="0" y="9" fontSize="10" fill="#555">가</text>
                  <text x="9" y="20" fontSize="11" fill="#3f78b8" fontWeight="700">나</text>
                  <path d="M1 13c0 3 3 4 6 2M5 13l2 2-2 2" stroke="#3f78b8" fill="none" />
                </svg>
              </EditIcon>
              바꾸기
            </EditItem>
            <EditItem>
              <EditIcon>
                <svg width="12" height="18" viewBox="0 0 12 18" fill="#fff" stroke="#555">
                  <path d="M.5.5v13l3.500-3 2.500 6 2.500-1-2.500-6h5z" />
                </svg>
              </EditIcon>
              선택
              <EditCaret $ml={5}><Caret /></EditCaret>
            </EditItem>
          </EditList>
          <GroupFoot>
            <FootText>편집</FootText>
          </GroupFoot>
        </Group>
        <RibbonSep />
        <CollapseCell>
          <svg width="12" height="7" viewBox="0 0 12 7" fill="none" stroke="#555" strokeWidth="1.500">
            <path d="M1 6l5-5 5 5" />
          </svg>
        </CollapseCell>
      </Ribbon>

      <Workspace>
        <NavPane>
          <NavHead>
            <NavTitle>탐색</NavTitle>
            <NavTools>
              <svg width="11" height="6" viewBox="0 0 11 6"><path d="M0 0h11L5.500 6z" fill="#7a7a7a" /></svg>
              <svg width="12" height="12" viewBox="0 0 12 12" stroke="#7a7a7a" strokeWidth="1.500"><path d="M.5.5l11 11M11.500.5l-11 11" /></svg>
            </NavTools>
          </NavHead>
          <NavSearch>
            문서 검색
            <NavSearchTools>
              <svg width="14" height="14" viewBox="0 0 14 14" fill="none" stroke="#2b579a" strokeWidth="2">
                <circle cx="8.500" cy="5.500" r="4" />
                <path d="M5.500 8.500 1 13" />
              </svg>
              <Caret />
            </NavSearchTools>
          </NavSearch>
          <NavTabs>
            <NavTab $w={42} $active>제목</NavTab>
            <NavTab $w={69}>페이지</NavTab>
            <NavTab $w={58}>결과</NavTab>
          </NavTabs>
          <TreeUp>
            <svg width="8" height="6" viewBox="0 0 8 6"><path d="M0 0h8v1H0zM4 1.500 8 6H0z" fill="#444" /></svg>
          </TreeUp>
          <TreeRow $indent={80}>Subject1</TreeRow>
          <TreeRow $indent={60}>Subject2</TreeRow>
          <TreeRow $indent={20}>
            <svg width="9" height="9" viewBox="0 0 9 9"><path d="M9 0v9H0z" fill="#444" /></svg>
            Context1
          </TreeRow>
          <TreeRow $indent={5} $selected>Context3</TreeRow>
        </NavPane>

        <DocArea>
          <Page>
            <Line $h={40}><Gutter /><ParaGap><Para /></ParaGap></Line>
            <Line $h={40}><Gutter /><ParaGap><Para /></ParaGap></Line>
            <Line $h={68} $size={28.5}>
              <Gutter $w={20}><Bullet $drop={8} /></Gutter>
              Subject1
              <ParaGap><Para /></ParaGap>
            </Line>
            <Line $h={42}><Gutter /><ParaGap><Para /></ParaGap></Line>
            <Line $h={47} $size={20}>
              <Gutter>
                <Fold width="10" height="10" viewBox="0 0 10 10"><path d="M10 0v10H0z" fill="#c6c6c6" /></Fold>
                <Bullet $drop={12} />
              </Gutter>
              Subject2
              <ParaGap><Para /></ParaGap>
            </Line>
            <Line $h={41}><Gutter /><ParaGap $mt={2}><Para /></ParaGap></Line>
            {contexts.map((c, i) => (
              <Line key={c} $h={40}>
                <Gutter>{i % 2 === 0 && i < 3 && <Bullet $drop={8} />}</Gutter>
                {c}
                <ParaGap><Para /></ParaGap>
              </Line>
            ))}
            <Line $h={42}><Gutter /><ParaGap><Para /></ParaGap></Line>
          </Page>
        </DocArea>

        <ScrollBar>
          <ScrollBtn>
            <svg width="9" height="5" viewBox="0 0 9 5"><path d="M0 5 4.500 0 9 5z" fill="#666" /></svg>
          </ScrollBtn>
          <ScrollThumb />
          <ScrollBtn>
            <svg width="9" height="5" viewBox="0 0 9 5"><path d="M0 0h9L4.500 5z" fill="#666" /></svg>
          </ScrollBtn>
        </ScrollBar>
      </Workspace>

      <StatusBar>
        <StatusLeft>
          <span>1/1 페이지</span>
          <StatusItem $ml={20}>7개 단어</StatusItem>
          <StatusItem $ml={21}>
            <svg width="18" height="15" viewBox="0 0 18 15" fill="none" stroke="#666">
              <path d="M9 2.500C7 1 3 1 .5 1.500v11C3 12 7 12 9 13.500V2.500zM9 2.500C11 1 15 1 17.500 1.500v11c-2.500-.5-6.500-.5-8.500 1" />
              <path d="M11 7l2 2 3-4" stroke="#444" />
            </svg>
          </StatusItem>
          <StatusItem $ml={18}>영어(미국)</StatusItem>
        </StatusLeft>
        <StatusRight>
          <ViewBtn $w={41}>
            <svg width="14" height="13" viewBox="0 0 14 13" fill="none" stroke="#666">
              <path d="M.5.5H7v11H.5zM7 .500h6.500v11H7zM2 3h3.500M2 5.500h3.500M2 8h3.500M8.500 3H12M8.500 5.500H12M8.500 8H12" />
            </svg>
          </ViewBtn>
          <ViewBtn $w={41} $on>
            <svg width="14" height="13" viewBox="0 0 14 13" fill="none" stroke="#666">
              <path d="M.5.5h13v12H.5zM2.500 3h9M2.500 5.500h9M2.500 8h9M2.500 10.500h9" />
            </svg>
          </ViewBtn>
          <ViewBtn $w={40}>
            <svg width="14" height="13" viewBox="0 0 14 13">
              <path d="M.5.5h10v9H.5zM2.500 3h6M2.500 5.500h4" fill="none" stroke="#666" />
              <circle cx="10" cy="9" r="4" fill="#666" />
            </svg>
          </ViewBtn>
          <svg width="15" height="3" viewBox="0 0 15 3"><path d="M6 0h9v2.500H6z" fill="#666" /></svg>
          <ZoomTrack>
            <ZoomThumb />
            <ZoomTick />
          </ZoomTrack>
          <svg width="12" height="12" viewBox="0 0 12 12"><path d="M5 0h2v5h5v2H7v5H5V7H0V5h5z" fill="#666" /></svg>
          <ZoomText>90 %</ZoomText>
        </StatusRight>
      </StatusBar>
    </Shell>
  );
}
